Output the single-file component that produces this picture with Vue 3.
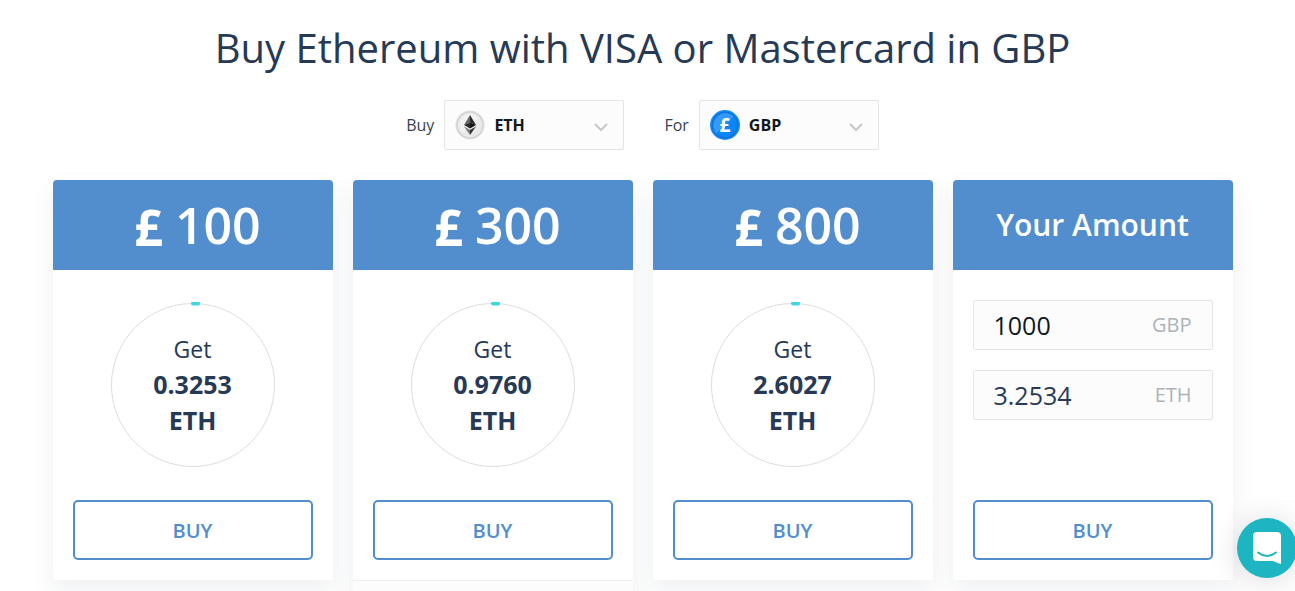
<script setup>
import { ref } from 'vue'

const coin = ref('ETH')
const currency = ref('GBP')
const spend = ref('1000')
const receive = ref('3.2534')
const offers = [
  { price: 100, amount: '0.3253', expanded: false },
  { price: 300, amount: '0.9760', expanded: true },
  { price: 800, amount: '2.6027', expanded: false },
]
</script>

<template>
  <main class="page">
    <h1>Buy Ethereum with VISA or Mastercard in GBP</h1>

    <div class="pickers">
      <div class="picker">
        <label for="coin">Buy</label>
        <div class="select-box">
          <svg class="coin" viewBox="0 0 30 30" aria-hidden="true">
            <circle cx="15" cy="15" r="14.5" fill="#e2e2e2" />
            <circle cx="15" cy="15" r="13" fill="#e9e9e9" stroke="#cfcfcf" stroke-width="1.2" />
            <path d="M5 14a10 10 0 0 1 18-6L8 23a10 10 0 0 1-3-9z" fill="#f2f2f2" />
            <path d="M15 5 9 15l6-2.6z" fill="#666" />
            <path d="M15 5l6 10-6-2.6z" fill="#2b2b2b" />
            <path d="M9 15l6-2.6V18.6z" fill="#2b2b2b" />
            <path d="M21 15l-6-2.6V18.6z" fill="#111" />
            <path d="M9 16.4l6 3.5V25z" fill="#777" />
            <path d="M21 16.4l-6 3.5V25z" fill="#333" />
          </svg>
          <select id="coin" v-model="coin"><option>ETH</option></select>
          <svg class="chevron" viewBox="0 0 16 10" aria-hidden="true"><path d="M2 2l6 6 6-6" /></svg>
        </div>
      </div>
      <div class="picker">
        <label for="currency">For</label>
        <div class="select-box">
          <svg class="coin" viewBox="0 0 30 30" aria-hidden="true">
            <circle cx="15" cy="15" r="15" fill="#188dfa" />
            <circle cx="15" cy="15" r="12.5" fill="#0c86f5" />
            <path d="M6.200 23.800a12.500 12.500 0 0 1 17.600-17.600z" fill="#3599fa" />
            <circle cx="15" cy="15" r="12.8" fill="none" stroke="#0c72d6" stroke-width="1.3" />
            <text x="15" y="22" text-anchor="middle">£</text>
          </svg>
          <select id="currency" v-model="currency"><option>GBP</option></select>
          <svg class="chevron" viewBox="0 0 16 10" aria-hidden="true"><path d="M2 2l6 6 6-6" /></svg>
        </div>
      </div>
    </div>

    <div class="cards">
      <section v-for="offer in offers" :key="offer.price" class="card">
        <h2 class="price"><span class="sign">£</span> {{ offer.price }}</h2>
        <div class="body">
          <div class="dial">
            <svg viewBox="0 0 166 166" aria-hidden="true">
              <circle cx="83" cy="83" r="81.5" fill="none" stroke="#ddd" stroke-width="1" />
              <path d="M83 1.5a81.5 81.5 0 0 1 5 .1" fill="none" stroke="#3bd7e3" stroke-width="4" stroke-linecap="round" />
            </svg>
            <p>Get<br /><strong>{{ offer.amount }}<br />ETH</strong></p>
          </div>
          <button type="button" class="buy">BUY</button>
        </div>
        <div v-if="offer.expanded" class="more"></div>
      </section>

      <section class="card">
        <h2>Your Amount</h2>
        <div class="body">
          <div class="fields">
            <div class="field">
              <input id="spend" v-model="spend" type="text" class="spend" />
              <label for="spend">GBP</label>
            </div>
            <div class="field">
              <input id="receive" v-model="receive" type="text" />
              <label for="receive">ETH</label>
            </div>
          </div>
          <button type="button" class="buy">BUY</button>
        </div>
      </section>
    </div>

    <button type="button" class="chat" aria-label="Open chat">
      <svg viewBox="0 0 28 32" aria-hidden="true">
        <path d="M4 0h20a4 4 0 0 1 4 4v28s-4-1-8-3H4a4 4 0 0 1-4-4V4a4 4 0 0 1 4-4z" fill="#fff" />
        <path d="M5 20.500q9 7 18 0" fill="none" stroke="#1db5c2" stroke-width="2" stroke-linecap="round" />
      </svg>
    </button>
  </main>
</template>

<style>
body {
  background: #fff;
}
</style>

<style scoped>
* {
  box-sizing: border-box;
}
.page {
  height: 100vh;
  overflow: hidden;
  padding: 18px 10px 0 0;
  color: #263a55;
  font-family: "Open Sans", "Noto Sans", sans-serif;
}
input,
select,
button {
  font-family: inherit;
}
h1 {
  margin: 0 0 22px;
  font-size: 40px;
  line-height: 60px;
  font-weight: 400;
  text-align: center;
}
.pickers {
  display: flex;
  justify-content: center;
  gap: 40px;
}
.picker {
  display: flex;
  align-items: center;
  gap: 10px;
  font-size: 16px;
  font-weight: 400;
  color: #3a434d;
}
.select-box {
  display: grid;
  grid-template-columns: 30px 1fr 16px;
  align-items: center;
  width: 180px;
  height: 50px;
  padding: 0 14px 0 10px;
  background: #fcfcfc;
  border: 1px solid #e3e5e6;
  border-radius: 2px;
}
.coin {
  grid-area: 1 / 1;
  width: 30px;
  height: 30px;
}
.coin text {
  font-size: 19px;
  font-weight: 700;
  fill: #fff;
}
.select-box select {
  grid-area: 1 / 1 / 2 / 4;
  width: 100%;
  height: 48px;
  padding: 0 0 0 39px;
  appearance: none;
  border: 0;
  background: transparent;
  color: #101820;
  font-size: 16px;
  font-weight: 700;
}
.chevron {
  grid-area: 1 / 3;
  width: 16px;
  height: 10px;
  margin-top: 4px;
  fill: none;
  stroke: #c8c8c8;
  stroke-width: 2;
  pointer-events: none;
}
.cards {
  display: grid;
  grid-template-columns: repeat(4, minmax(0, 1fr));
  align-items: start;
  gap: 20px;
  max-width: 1180px;
  margin: 30px auto 0;
}
.card {
  background: #fff;
  border-radius: 4px;
  box-shadow: 0 10px 24px rgba(38, 58, 85, 0.08);
}
h2 {
  display: flex;
  align-items: center;
  justify-content: center;
  height: 90px;
  margin: 0;
  background: #528ece;
  border-radius: 4px 4px 0 0;
  color: #fff;
  font-size: 30px;
  line-height: 90px;
  font-weight: 600;
}
.price {
  gap: 12px;
  padding-left: 10px;
  font-size: 50px;
}
.sign {
  padding-top: 4px;
  font-weight: 700;
}
.body {
  display: flex;
  flex-direction: column;
  justify-content: space-between;
  height: 310px;
  padding: 30px 20px 20px;
}
.dial {
  display: grid;
  place-items: center;
  align-self: center;
  margin-top: 2px;
}
.dial > * {
  grid-area: 1 / 1;
}
.dial svg {
  width: 166px;
  height: 166px;
}
.dial p {
  margin: 0;
  font-size: 23px;
  line-height: 35px;
  font-weight: 400;
  text-align: center;
}
.dial strong {
  font-size: 25px;
  font-weight: 700;
}
.buy {
  height: 60px;
  background: #fff;
  border: 2px solid #528ece;
  border-radius: 5px;
  color: #528ece;
  font-size: 20px;
  font-weight: 600;
}
.more {
  height: 40px;
  background: #fcfcfc;
  border-top: 1px solid #eceeef;
}
.fields {
  display: grid;
  grid-template-columns: minmax(0, 1fr);
  gap: 20px;
}
.field {
  display: flex;
  align-items: center;
  height: 50px;
  padding: 0 20px;
  background: #fcfcfc;
  border: 1px solid #e3e5e6;
  border-radius: 2px;
}
.field input {
  flex: 1;
  min-width: 0;
  height: 48px;
  padding: 0;
  border: 0;
  background: transparent;
  color: #263a55;
  font-size: 25px;
  font-weight: 500;
}
.field .spend {
  color: #101820;
}
.field label {
  padding-bottom: 2px;
  color: #adb3b8;
  font-size: 20px;
}
.chat {
  position: fixed;
  right: -2px;
  bottom: 13px;
  display: grid;
  place-items: center;
  width: 60px;
  height: 60px;
  padding: 0;
  border: 0;
  border-radius: 50%;
  background: #1db5c2;
  box-shadow: 0 2px 30px rgba(0, 0, 0, 0.15);
}
.chat svg {
  width: 28px;
  height: 32px;
}
</style>
